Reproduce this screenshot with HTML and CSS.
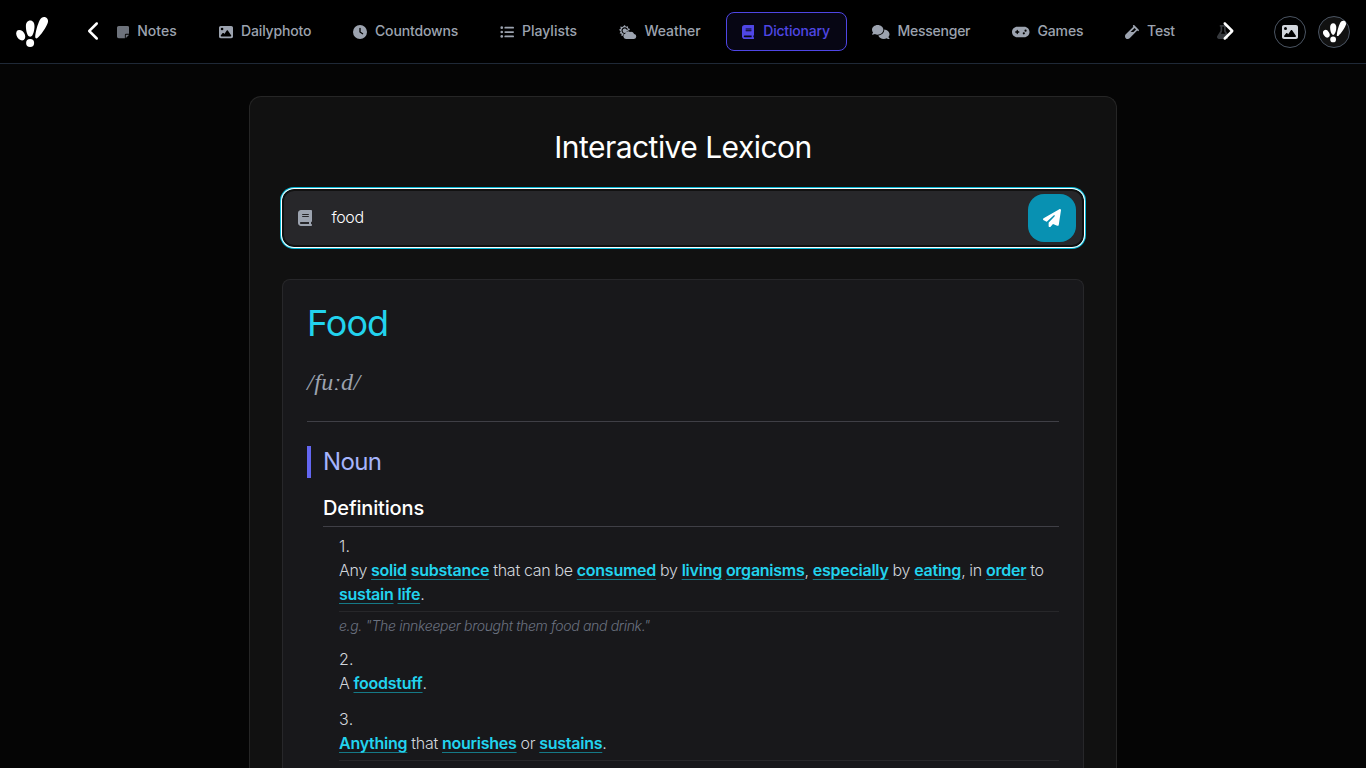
FILE: index.html
```html
<!DOCTYPE html>
<html lang="en">
<head>
<meta charset="utf-8">
<title>Dictionary</title>
<link rel="stylesheet" href="styles.css">
</head>
<body>
<svg class="defs" aria-hidden="true">
  <symbol id="logo" viewBox="0 0 32 32">
    <ellipse cx="4.700" cy="19.200" rx="4" ry="5.700" transform="rotate(-32 4.700 19.200)"/>
    <path d="M14.200 4.500c2.700 0 4.300 2.300 4.300 5.700 0 4-1.200 8.700-3.100 10.100-.8.600-1.700.600-2.500 0C11 18.900 9.900 14.200 9.900 10.200c0-3.400 1.600-5.700 4.300-5.700z"/>
    <path d="M28.800 1.100c2.700.6 3.900 3.100 2.900 6-1.500 4.400-6.800 12.200-10.300 15-.8.700-2.300.2-2.200-1.100.2-4.600 2.300-12.400 4.600-16.900C25 1.900 26.900.7 28.800 1.100z"/>
    <circle cx="14.100" cy="27" r="4"/>
  </symbol>
  <symbol id="image" viewBox="0 0 512 512"><path d="M0 96C0 60.700 28.700 32 64 32H448c35.300 0 64 28.700 64 64V416c0 35.300-28.700 64-64 64H64c-35.300 0-64-28.700-64-64V96zM323.800 202.500c-4.500-6.600-11.900-10.500-19.800-10.500s-15.400 3.900-19.800 10.500l-87 127.600L170.700 297c-4.600-5.700-11.500-9-18.700-9s-14.200 3.300-18.700 9l-64 80c-5.800 7.200-6.900 17.100-2.900 25.400s12.400 13.600 21.600 13.600h96 32H424c8.900 0 17.100-4.900 21.200-12.800s3.600-17.400-1.400-24.700l-120-176zM112 192a48 48 0 1 0 0-96 48 48 0 1 0 0 96z"/></symbol>
  <symbol id="book" viewBox="0 0 448 512"><path d="M96 0C43 0 0 43 0 96V416c0 53 43 96 96 96H384h32c17.700 0 32-14.300 32-32s-14.300-32-32-32V384c17.700 0 32-14.300 32-32V32c0-17.700-14.300-32-32-32H384 96zm0 384H352v64H96c-17.700 0-32-14.300-32-32s14.300-32 32-32zm32-240c0-8.800 7.200-16 16-16H336c8.800 0 16 7.200 16 16s-7.200 16-16 16H144c-8.800 0-16-7.200-16-16zm16 48H336c8.800 0 16 7.200 16 16s-7.200 16-16 16H144c-8.800 0-16-7.200-16-16s7.200-16 16-16z"/></symbol>
</svg>

<header class="topbar">
  <svg class="brand"><use href="#logo"/></svg>
  <div class="nav-wrap">
    <svg class="chev" viewBox="0 0 320 512"><path d="M9.400 233.400c-12.500 12.500-12.500 32.800 0 45.300l192 192c12.500 12.500 32.800 12.500 45.300 0s12.500-32.800 0-45.300L77.300 256 246.600 86.600c12.500-12.500 12.500-32.800 0-45.300s-32.800-12.500-45.300 0l-192 192z"/></svg>
    <nav class="nav">
      <a class="item w-notes"><svg class="narrow dim" viewBox="0 0 448 512"><path d="M64 32C28.700 32 0 60.700 0 96V416c0 35.300 28.700 64 64 64H288V368c0-26.500 21.500-48 48-48H448V96c0-35.300-28.700-64-64-64H64zM448 352H402.700 336c-8.800 0-16 7.200-16 16v66.700V480l32-32 64-64 32-32z"/></svg><span>Notes</span></a>
      <a class="item w-photo"><svg><use href="#image"/></svg><span>Dailyphoto</span></a>
      <a class="item w-count"><svg viewBox="0 0 512 512"><path d="M256 0a256 256 0 1 1 0 512A256 256 0 1 1 256 0zM232 120V256c0 8 4 15.500 10.700 20l96 64c11 7.400 25.900 4.400 33.300-6.700s4.400-25.900-6.700-33.300L280 243.200V120c0-13.300-10.700-24-24-24s-24 10.700-24 24z"/></svg><span>Countdowns</span></a>
      <a class="item w-play"><svg viewBox="0 0 512 512"><circle cx="64" cy="96" r="48"/><circle cx="64" cy="256" r="48"/><circle cx="64" cy="416" r="48"/><rect x="160" y="64" width="352" height="64" rx="32"/><rect x="160" y="224" width="352" height="64" rx="32"/><rect x="160" y="384" width="352" height="64" rx="32"/></svg><span>Playlists</span></a>
      <a class="item w-weather"><svg class="wide" viewBox="0 0 640 512"><path fill-rule="evenodd" d="M211 0l45 62 74-16 2 76 72 24-29 46c-50 3-93 34-112 78-18 3-35 9-50 18a80 80 0 1 1 75-105c12-9 25-17 39-22A121 121 0 1 0 181 320c-22 20-37 46-41 75l-50 5 3-76-72-24 43-62L0 176l64-42-15-75 76 12z"/><circle cx="211" cy="208" r="50"/><path d="M256 512a100 100 0 0 1-22-197 104 104 0 0 1 164-62 132 132 0 0 1 156 73A94 94 0 0 1 548 512z"/></svg><span>Weather</span></a>
      <a class="item active w-dict"><svg class="narrow"><use href="#book"/></svg><span>Dictionary</span></a>
      <a class="item w-mess"><svg class="wide" viewBox="0 0 640 512"><path d="M208 352c114.900 0 208-78.800 208-176S322.900 0 208 0S0 78.800 0 176c0 38.600 14.700 74.300 39.600 103.400c-3.500 9.400-8.700 17.700-14.200 24.700c-4.800 6.200-9.700 11-13.300 14.300c-1.800 1.600-3.300 2.900-4.300 3.700l-1.300 1C1 327.200-1.400 334.400 .8 340.900S9.100 352 16 352c21.800 0 43.800-5.600 62.100-12.500c9.200-3.500 17.800-7.400 25.200-11.400C134.100 343.300 169.800 352 208 352zM448 176c0 112.300-99.100 196.900-216.500 207C255.800 457.400 336.400 512 432 512c38.200 0 73.900-8.700 104.700-23.900c7.500 4 16 7.900 25.200 11.400c18.300 6.900 40.300 12.500 62.100 12.500c6.900 0 13.100-4.500 15.200-11.100c2.100-6.600-.2-13.800-5.800-17.900l-1.300-1c-1-.8-2.500-2-4.300-3.700c-3.600-3.300-8.500-8.100-13.300-14.300c-5.500-7-10.700-15.400-14.200-24.700c24.900-29 39.600-64.700 39.600-103.400c0-92.800-84.900-168.900-192.600-175.500c.4 5.100 .6 10.300 .6 15.500z"/></svg><span>Messenger</span></a>
      <a class="item w-games"><svg class="wide" viewBox="0 0 640 512"><path d="M192 64C86 64 0 150 0 256S86 448 192 448H448c106 0 192-86 192-192s-86-192-192-192H192zM496 168a40 40 0 1 1 0 80 40 40 0 1 1 0-80zM392 304a40 40 0 1 1 80 0 40 40 0 1 1 -80 0zM168 200c0-13.300 10.700-24 24-24s24 10.700 24 24v32h32c13.300 0 24 10.700 24 24s-10.700 24-24 24H216v32c0 13.300-10.700 24-24 24s-24-10.700-24-24V280H136c-13.300 0-24-10.700-24-24s10.700-24 24-24h32V200z"/></svg><span>Games</span></a>
      <a class="item w-test"><svg viewBox="0 0 512 512"><path fill-rule="evenodd" d="M342.600 9.400c-12.500-12.500-32.800-12.500-45.300 0s-12.500 32.800 0 45.300l9.400 9.400L28.100 342.600C10.100 360.600 0 385 0 410.500V416c0 53 43 96 96 96h5.500c25.500 0 49.900-10.100 67.900-28.100L448 205.300l9.400 9.400c12.500 12.500 32.800 12.500 45.300 0s12.500-32.800 0-45.300l-160-160zM205.300 256L352 109.300 402.700 160l-96 96H205.300z"/></svg><span>Test</span></a>
      <a class="item w-lab"><svg class="narrow" viewBox="0 0 448 512"><path d="M288 0H160 128C110.300 0 96 14.300 96 32s14.300 32 32 32V196.800c0 11.800-3.300 23.500-9.500 33.500L10.300 406.200C3.600 417.200 0 429.700 0 442.600C0 480.900 31.100 512 69.400 512H378.600c38.300 0 69.400-31.100 69.400-69.400c0-12.800-3.600-25.400-10.300-36.400L329.500 230.400c-6.200-10.100-9.500-21.700-9.500-33.500V64c17.700 0 32-14.300 32-32s-14.300-32-32-32H288zM192 196.800V64h64V196.800c0 23.700 6.600 46.900 19 67.100L309.500 320h-171L173 263.900c12.400-20.200 19-43.400 19-67.100z"/></svg></a>
    </nav>
    <svg class="chev next" viewBox="0 0 320 512"><path d="M310.600 233.400c12.500 12.500 12.500 32.800 0 45.300l-192 192c-12.500 12.500-32.800 12.500-45.300 0s-12.500-32.800 0-45.300L242.700 256 73.400 86.600c-12.500-12.500-12.500-32.800 0-45.300s32.800-12.500 45.300 0l192 192z"/></svg>
  </div>
  <div class="actions">
    <button class="round"><svg class="pic"><use href="#image"/></svg></button>
    <button class="round avatar"><svg class="face"><use href="#logo"/></svg></button>
  </div>
</header>

<main class="card">
  <h1 class="title">Interactive Lexicon</h1>
  <form class="search">
    <div class="field">
      <svg class="field-icon"><use href="#book"/></svg>
      <span class="query">food</span>
      <button class="send" type="button"><svg viewBox="0 0 512 512"><path d="M498.100 5.600c10.100 7 15.400 19.100 13.500 31.200l-64 416c-1.500 9.700-7.400 18.200-16 23s-18.900 5.400-28 1.600L284 427.700l-68.500 74.100c-8.900 9.700-22.900 12.900-35.200 8.100S160 493.200 160 480V396.400c0-4 1.500-7.800 4.200-10.700L331.800 202.800c5.800-6.300 5.600-16-.4-22s-15.700-6.400-22-.7L106 360.800 17.700 316.600C7.100 311.300 .3 300.700 0 288.900s5.900-22.800 16.100-28.700l448-256c10.700-6.100 23.900-5.500 34 1.400z"/></svg></button>
    </div>
  </form>

  <article class="entry">
    <div class="entry-head">
      <h2 class="word">Food</h2>
      <p class="phonetic">/fuːd/</p>
    </div>
    <h3 class="pos">Noun</h3>
    <section class="senses">
      <h4 class="subhead">Definitions</h4>
      <ol class="list">
        <li><div class="num">1.</div><p class="def ruled">Any <a>solid</a> <a>substance</a> that can be <a>consumed</a> by <a>living</a> <a>organisms</a>, <a>especially</a> by <a>eating</a>, in <a>order</a> to <br><a>sustain</a> <a>life</a>.</p><p class="example">e.g. "The innkeeper brought them food and drink."</p></li>
        <li><div class="num">2.</div><p class="def">A <a>foodstuff</a>.</p></li>
        <li><div class="num">3.</div><p class="def ruled"><a>Anything</a> that <a>nourishes</a> or <a>sustains</a>.</p></li>
      </ol>
    </section>
  </article>
</main>
</body>
</html>
```
FILE: styles.css
```css
* { box-sizing: border-box; margin: 0; padding: 0; }
body { height: 768px; overflow: hidden; background: #050505; color: #fff; font-family: Inter, "Liberation Sans", sans-serif; }
.defs { display: none; }
svg { fill: currentColor; flex: none; }
button { border: 0; color: inherit; display: flex; align-items: center; justify-content: center; }

.topbar { height: 64px; background: #000; border-bottom: 1px solid #1f2937; display: flex; align-items: center; padding: 0 16px; }
.brand { width: 32px; height: 32px; }
.nav-wrap { display: flex; align-items: center; margin-left: 40px; width: 1150px; }
.chev { width: 12.500px; height: 20px; margin-bottom: 2px; }
.next { margin-left: -7px; z-index: 1; }
.nav { display: flex; margin-left: .5px; width: 1127px; overflow: hidden; }
.item { display: flex; align-items: center; flex: none; gap: 8px; height: 39px; padding: 0 15px; border: 1px solid transparent; border-radius: 8px; margin-right: 10px; color: #9ca3af; font-size: 14px; font-weight: 500; letter-spacing: -.15px; white-space: nowrap; }
.item span { padding-bottom: 2px; }
.item svg { width: 14px; height: 14px; }
.item .narrow { width: 12.250px; }
.item .wide { width: 17.500px; }
.item .dim { opacity: .7; }
.item.active { color: #4f46e5; background: #070614; border-color: #4f46e5; letter-spacing: -.2px; }
.active span { padding-left: 1px; }
.w-notes { width: 92px; letter-spacing: 0; }
.w-photo { width: 124px; }
.w-count { width: 137px; }
.w-play { width: 109px; letter-spacing: 0; }
.w-weather { width: 113px; letter-spacing: -.05px; }
.w-dict { width: 121px; }
.w-mess { width: 130px; margin-left: -1px; letter-spacing: -.25px; }
.w-games { width: 103px; }
.w-test { width: 82px; }
.w-lab { opacity: .35; }
.actions { display: flex; gap: 12px; margin-left: auto; }
.round { width: 32px; height: 32px; border: 1px solid #4b5563; border-radius: 50%; background: #000; }
.pic { width: 16px; height: 16px; color: #d1d5db; }
.avatar { background: #111; }
.face { width: 23px; height: 23px; }

.card { width: 868px; height: 672px; overflow: hidden; margin: 32px auto 0; padding: 32px 32px 0; border: 1px solid #262626; border-bottom: 0; border-radius: 12px 12px 0 0; background: #111; }
.title { font-size: 30px; line-height: 36px; font-weight: 400; letter-spacing: -.54px; text-align: center; }
.search { height: 58px; margin-top: 24px; padding: 2px; border-radius: 12px; box-shadow: 0 0 0 1px #fff, 0 0 0 2px #06b6d4; }
.field { height: 54px; display: flex; align-items: center; padding: 0 6px 0 14px; border-radius: 10px; background: #27272a; }
.field-icon { width: 14px; height: 16px; color: #9ca3af; }
.query { margin-left: 19.500px; padding-bottom: 2px; font-size: 16px; font-weight: 300; letter-spacing: -.4px; flex: 1; }
.send { width: 48px; height: 48px; border-radius: 16px; background: #0891b2; }
.send svg { width: 18px; height: 18px; }

.entry { margin-top: 32px; height: 489px; overflow: hidden; padding: 23px 24px 0; border: 1px solid #27272a; border-bottom: 0; border-radius: 8px 8px 0 0; background: #18181b; }
.entry-head { height: 119px; border-bottom: 1px solid #3f3f46; }
.word { font-size: 36px; line-height: 40px; font-weight: 400; letter-spacing: -1px; color: #22d3ee; }
.phonetic { margin-top: 23px; font: italic 24px/32px "Liberation Serif", serif; letter-spacing: .5px; color: #9ca3af; }
.pos { margin-top: 24px; padding-left: 12px; border-left: 4px solid #6366f1; font-size: 24px; line-height: 32px; font-weight: 400; letter-spacing: -.6px; color: #a5b4fc; }
.senses { margin-top: 16px; padding-left: 16px; }
.subhead { font-size: 20px; line-height: 28px; font-weight: 550; letter-spacing: -.15px; padding-bottom: 4px; border-bottom: 1px solid #3f3f46; }
.list { list-style: none; padding: 7px 0 0 16px; display: grid; grid-template-columns: 100%; gap: 12px; font-size: 16px; line-height: 24px; font-weight: 300; letter-spacing: -.25px; word-spacing: -.3px; color: #d1d5db; }
.num { letter-spacing: .3px; }
.def { white-space: nowrap; }
.def a { color: #22d3ee; font-weight: 600; text-decoration: underline 1px #157987; text-underline-offset: 3px; text-decoration-skip-ink: none; }
.ruled { padding-bottom: 5px; border-bottom: 1px solid #27272a; }
.example { margin: 4px 0 -1px; font-size: 14px; line-height: 20px; font-style: italic; letter-spacing: -.32px; word-spacing: 0; color: #6b7280; }
```
